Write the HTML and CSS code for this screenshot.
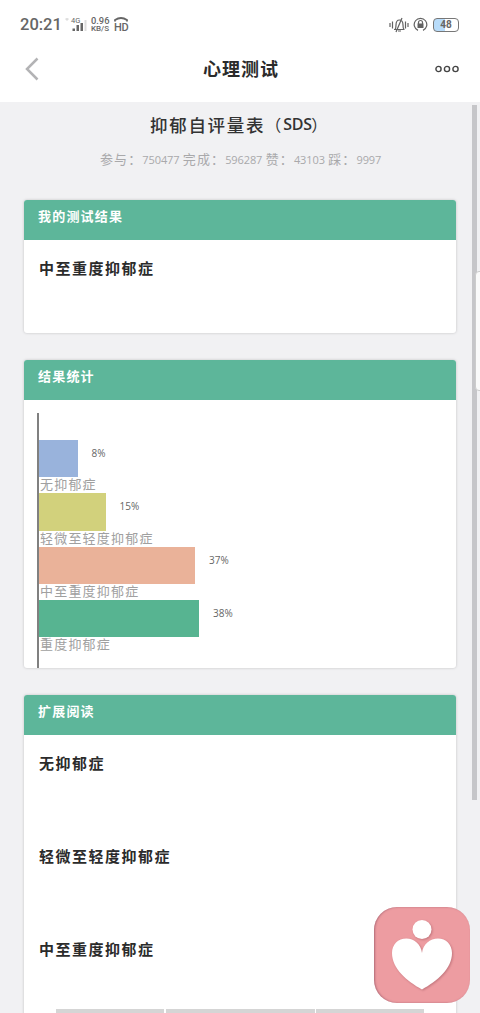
FILE: index.html
```html
<!DOCTYPE html>
<html lang="zh-CN">

	<head>
		<meta charset="UTF-8">
		<title>心理测试</title>
		<link rel="stylesheet" href="styles.css">
	</head>

	<body>
		<div class="top">
			<div class="status">
				<span class="time">20:21</span>
				<svg class="signal" width="23" height="17" viewBox="0 0 23 17">
					<path d="M1 3q2-2 4 0L3 5z" fill="#ddd" />
					<text x="7" y="7" font-size="7.5">4G</text>
					<path d="M8.500 12.500H11V15H8.500zM12.500 9H15v6h-2.500zM16.500 7H19v8h-2.500z" fill="#666" />
					<path d="M20.500 4H22.500v11h-2z" fill="#ddd" />
				</svg>
				<div class="speed"><span>0.96</span><span>KB/S</span></div>
				<div class="hd">
					<svg width="14" height="5" viewBox="0 0 14 5"><path d="M1 4.500V3q6-4 12 0v1.500" fill="none" stroke="#666" stroke-width="1.800" /></svg>
					<span>HD</span>
				</div>
				<div class="right">
					<svg width="20" height="16" viewBox="0 0 20 16" fill="none" stroke="#626262" stroke-width="1.200">
						<path d="M1 6v4M3.500 4.500v7M16.500 4.500v7M19 6v4M5 12.500h10.500M6 12.500q1-1 1-4.500 0-5 3.500-5T14 8q0 3.500 1 4.500M9 14h3M13 1L7 15" />
					</svg>
					<svg width="15" height="15" viewBox="0 0 15 15" fill="none" stroke="#626262" stroke-width="1.200">
						<path d="M5 13.400A6.300 6.300 0 1 1 10 13.400M5.500 7V5.500a2 2 0 0 1 4 0V7" />
						<path d="M4.500 6.500h6V11h-6z" fill="#626262" stroke="none" />
					</svg>
					<div class="battery"><span>48</span></div>
				</div>
			</div>
			<div class="nav">
				<svg class="back" width="14" height="24" viewBox="0 0 14 24"><path d="M12.500 1.500L2 12l10.500 10.500" fill="none" stroke="#b3b3b5" stroke-width="2.500" /></svg>
				<h1>心理测试</h1>
				<svg class="more" width="24" height="8" viewBox="0 0 24 8" fill="none" stroke="#444" stroke-width="1.400">
					<circle cx="3.500" cy="4" r="2.600" />
					<circle cx="12" cy="4" r="2.600" />
					<circle cx="20.500" cy="4" r="2.600" />
				</svg>
			</div>
		</div>

		<div class="content">
			<h2>抑郁自评量表<span class="left-mark">（</span><b>SDS</b><span>）</span></h2>
			<div class="meta">
				<p>参与：<span>750477</span></p>
				<p>完成：<span>596287</span></p>
				<p>赞：<span>43103</span></p>
				<p>踩：<span>9997</span></p>
			</div>

			<div class="card result">
				<h3>我的测试结果</h3>
				<h4>中至重度抑郁症</h4>
			</div>

			<div class="card count">
				<h3>结果统计</h3>
				<div class="chart">
					<div class="row"><div class="line"><i class="bar blue"></i><span>8%</span></div><p>无抑郁症</p></div>
					<div class="row"><div class="line"><i class="bar yellow"></i><span>15%</span></div><p>轻微至轻度抑郁症</p></div>
					<div class="row"><div class="line"><i class="bar orange"></i><span>37%</span></div><p>中至重度抑郁症</p></div>
					<div class="row"><div class="line"><i class="bar green"></i><span>38%</span></div><p>重度抑郁症</p></div>
				</div>
			</div>

			<div class="card read">
				<h3>扩展阅读</h3>
				<h4>无抑郁症</h4>
				<h4>轻微至轻度抑郁症</h4>
				<h4>中至重度抑郁症</h4>
				<div class="tabs"><i></i><i></i><i></i></div>
			</div>
		</div>

		<div class="scrollbar"></div>
		<div class="drawer"></div>
		<div class="float">
			<svg width="96" height="96" viewBox="0 0 96 96" fill="#fff">
				<circle cx="48" cy="22.500" r="9.500" />
				<path d="M48 46C47 37 40 31.500 32.500 31.500C24 31.500 18 37.500 18 46C18 62 33 74 48 82.500C63 74 78 62 78 46C78 37.500 72 31.500 64 31.500C56 31.500 49 37 48 46z" />
			</svg>
		</div>
	</body>

</html>
```

FILE: styles.css
```css
* {
	margin: 0;
	padding: 0;
	box-sizing: border-box;
}

body {
	width: 480px;
	height: 1013px;
	overflow: hidden;
	position: relative;
	background: #f1f1f3;
	font-family: "Noto Sans CJK SC", sans-serif;
	color: #2b2b2b;
}

svg {
	display: block;
	flex: none;
}

.top {
	height: 102px;
	background: #fff;
}

.status {
	height: 48px;
	padding: 1px 21px 0 20px;
	display: flex;
	align-items: center;
	font-family: Roboto, sans-serif;
	color: #666;
}

.time {
	width: 44px;
	font-size: 16.5px;
	font-weight: 500;
}

.signal {
	fill: #666;
}

.speed {
	width: 20px;
	margin-left: 4px;
	display: flex;
	flex-direction: column;
	font-size: 8.5px;
	line-height: 8px;
	font-weight: 500;
	white-space: nowrap;
}

.speed span:first-child {
	font-size: 9.3px;
}

.speed span:last-child {
	font-size: 8px;
}

.hd {
	margin-left: 3px;
	font-size: 11px;
	line-height: 11px;
	font-weight: 500;
	letter-spacing: -0.4px;
}

.right {
	margin-left: auto;
	display: flex;
	align-items: center;
	gap: 4px;
}

.battery {
	width: 26px;
	height: 14px;
	margin-left: 1px;
	border: 1px solid #777;
	border-radius: 4px;
	background: linear-gradient(to right, #b8dcfa 45%, #fff 45%);
	font-size: 10px;
	line-height: 12px;
	font-weight: bold;
	text-align: center;
}

.nav {
	height: 41px;
	padding: 0 21px 0 25px;
	display: flex;
	align-items: center;
	justify-content: space-between;
}

h1 {
	margin: -2px 0 0 8px;
	font-size: 18px;
	letter-spacing: 1px;
	font-weight: 700;
}

.content {
	padding: 0 24px;
}

h2 {
	height: 44px;
	padding-left: 126px;
	display: flex;
	align-items: center;
	font-size: 17.5px;
	letter-spacing: 1.7px;
	font-weight: 500;
	color: #333;
	white-space: nowrap;
}

h2 span {
	width: 18px;
	margin-left: -3px;
	font-weight: 400;
	font-size: 16px;
}

h2 .left-mark {
	margin-left: 0;
}

h2 b {
	width: 31px;
	font-family: "Open Sans", sans-serif;
	font-size: 16px;
	letter-spacing: -0.3px;
	font-weight: 600;
}

.meta {
	height: 28px;
	display: flex;
	gap: 3.4px;
	padding-left: 76px;
	font-size: 13px;
	line-height: 26px;
	letter-spacing: 1.1px;
	color: #a9a9ab;
	white-space: nowrap;
}

.meta span {
	font-family: "Open Sans", sans-serif;
	font-size: 11px;
	letter-spacing: -0.1px;
}

.card {
	background: #fff;
	border-radius: 3px;
	box-shadow: 0 0 3px rgba(0, 0, 0, 0.2);
	overflow: hidden;
}

.card h3 {
	height: 40px;
	padding-left: 14px;
	background: #5db69a;
	color: #fff;
	font-size: 13px;
	line-height: 31px;
	letter-spacing: 1.2px;
	font-weight: 700;
}

.card h4 {
	height: 93.3px;
	padding: 16px 0 0 15px;
	font-size: 15px;
	line-height: 24px;
	letter-spacing: 1.5px;
	font-weight: 700;
}

.result {
	height: 133px;
	margin-top: 26px;
}

.count {
	height: 308px;
	margin-top: 27px;
}

.chart {
	height: 255px;
	margin: 13px 0 0 13px;
	padding-top: 27px;
	border-left: 2px solid #808080;
}

.row {
	height: 53.3px;
}

.line {
	height: 37.3px;
	display: flex;
}

.line span {
	margin-left: 14px;
	font-family: "Open Sans", sans-serif;
	font-size: 10px;
	line-height: 26px;
	color: #666;
}

.row p {
	padding-left: 1px;
	font-size: 13px;
	line-height: 14px;
	letter-spacing: 1.2px;
	color: #a0a0a0;
}

.bar.blue {
	width: 38.5px;
	background: #99b3dc;
}

.bar.yellow {
	width: 66.5px;
	background: #d2d17c;
}

.bar.orange {
	width: 156px;
	background: #eab299;
}

.bar.green {
	width: 160px;
	background: #57b491;
}

.read {
	height: 340px;
	margin-top: 26.5px;
}

.tabs {
	height: 4px;
	margin: -5px 32px 0;
	display: grid;
	grid-template-columns: 108px 149px 108px;
	gap: 1.5px;
}

.tabs i {
	background: #d5d5d5;
}

.scrollbar {
	position: absolute;
	left: 472px;
	top: 105px;
	width: 5px;
	height: 695px;
	background: #c6c6c9;
}

.drawer {
	position: absolute;
	left: 475px;
	top: 271px;
	width: 9px;
	height: 120px;
	border: 1px solid #ccc;
	border-radius: 4px;
	background: #fafafa;
}

.float {
	position: absolute;
	left: 374px;
	top: 907px;
	width: 96px;
	height: 96px;
	border-radius: 23px;
	background: #ed9ca1;
	box-shadow: inset 1px 0 2px rgba(120, 60, 80, 0.5);
}

.float svg {
	filter: drop-shadow(1px 1px 1px rgba(130, 60, 70, 0.4));
}
```
